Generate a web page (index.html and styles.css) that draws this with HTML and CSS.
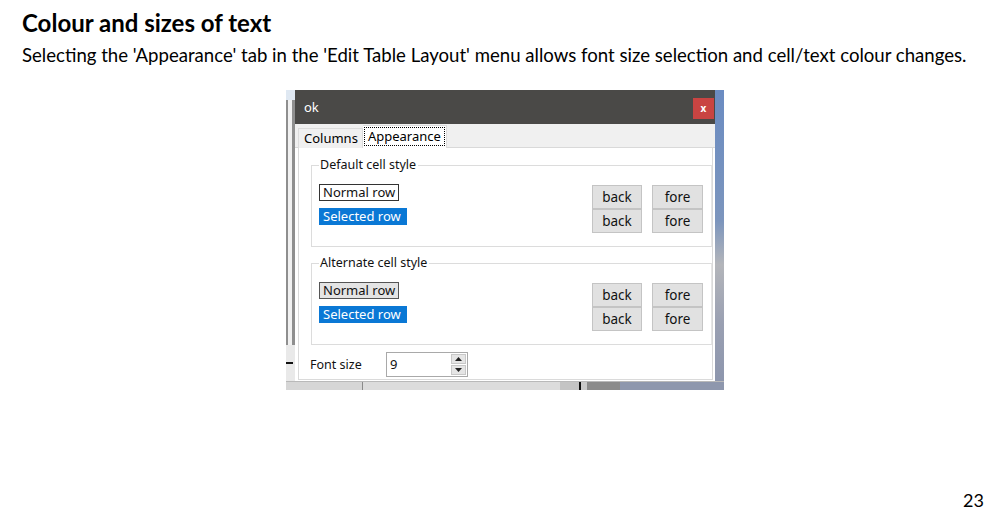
FILE: index.html
```html
<!DOCTYPE html>
<html lang="en">
<head>
<meta charset="utf-8">
<title>Colour and sizes of text</title>
<link rel="stylesheet" href="styles.css">
</head>
<body>
<div class="doc">
  <h1 class="title">Colour and sizes of text</h1>
  <p class="lead">Selecting the 'Appearance' tab in the 'Edit Table Layout' menu allows font size selection and cell/text colour changes.</p>

  <div class="figure">
    <div class="fig-main">
      <div class="strip-left">
        <div class="sl-top"></div>
        <div class="sl-bottom"><span class="sl-mark"></span></div>
      </div>
      <div class="dialog">
        <div class="titlebar">
          <span class="title-text">ok</span>
          <span class="close">x</span>
        </div>
        <div class="tabstrip">
          <div class="tab">Columns</div>
          <div class="tab tab-active"><span class="focus">Appearance</span></div>
        </div>
        <div class="tabpage">
          <fieldset class="group">
            <legend class="legend">Default cell style</legend>
            <div class="group-body">
              <div class="samples">
                <span class="sample sample-normal">Normal row</span>
                <span class="sample sample-selected">Selected row</span>
              </div>
              <div class="buttons">
                <span class="btn">back</span><span class="btn">fore</span>
                <span class="btn">back</span><span class="btn">fore</span>
              </div>
            </div>
          </fieldset>
          <fieldset class="group group-alt">
            <legend class="legend">Alternate cell style</legend>
            <div class="group-body">
              <div class="samples">
                <span class="sample sample-alt">Normal row</span>
                <span class="sample sample-selected">Selected row</span>
              </div>
              <div class="buttons">
                <span class="btn">back</span><span class="btn">fore</span>
                <span class="btn">back</span><span class="btn">fore</span>
              </div>
            </div>
          </fieldset>
          <div class="fontrow">
            <span class="fontlabel">Font size</span>
            <div class="spin">
              <span class="spin-value">9</span>
              <div class="spin-btns">
                <span class="spin-btn">
                  <svg width="7" height="4" viewBox="0 0 7 4"><path d="M0 4 L3.5 0 L7 4 Z" fill="#222"/></svg>
                </span>
                <span class="spin-btn">
                  <svg width="7" height="4" viewBox="0 0 7 4"><path d="M0 0 L3.5 4 L7 0 Z" fill="#222"/></svg>
                </span>
              </div>
            </div>
          </div>
        </div>
      </div>
      <div class="strip-right"></div>
    </div>
    <div class="fig-bottom"></div>
  </div>

  <div class="pagenum">23</div>
</div>
</body>
</html>
```

FILE: styles.css
```css
* { box-sizing: border-box; }

body {
  margin: 0;
  background: #ffffff;
  color: #000000;
  font-family: Lato, "Liberation Sans", sans-serif;
}

.doc {
  padding: 9px 0 0 22px;
}

.title {
  margin: 0;
  font-size: 24px;
  line-height: 28px;
  font-weight: 700;
}

.lead {
  margin: 7px 0 0 0;
  font-size: 18.6px;
  line-height: 22px;
  white-space: nowrap;
}

/* ---------- embedded screenshot ---------- */
.figure {
  margin: 24px 0 0 264px;
  width: 438px;
  height: 300px;
  display: flex;
  flex-direction: column;
  font-family: "Noto Sans", "DejaVu Sans", sans-serif;
}

.fig-main {
  display: flex;
  height: 291px;
}

.strip-left {
  width: 9px;
  display: flex;
  flex-direction: column;
}

.sl-top {
  flex: 1;
  background:
    linear-gradient(to bottom, #dfe8f2 0 10px, transparent 10px),
    linear-gradient(to right, #8f8f8f 0 2px, #f1f1f1 2px 6px, #8f8f8f 6px 9px);
}

.sl-bottom {
  height: 36px;
  background: #e9e9e9;
  display: flex;
  flex-direction: column;
  padding-top: 17px;
}

.sl-mark {
  display: block;
  width: 7px;
  height: 2px;
  background: #111;
}

.strip-right {
  width: 9px;
  background: linear-gradient(to bottom, #6b8cc2 0%, #7c95bd 45%, #b3b5ba 60%, #9aa0b2 80%, #8d96ad 100%);
}

.fig-bottom {
  height: 9px;
  background:
    linear-gradient(to right,
      #d6d6d6 0 76px, #8a8a8a 76px 77px, #dcdcdc 77px 274px,
      #c4c4c4 274px 293px, #111 293px 295px, #c9c9c9 295px 301px,
      #8b8b8b 301px 334px, #8e97ad 334px 438px);
  border-top: 1px solid #b9b9b9;
}

/* ---------- dialog ---------- */
.dialog {
  width: 420px;
  display: flex;
  flex-direction: column;
  background: #ffffff;
}

.titlebar {
  height: 34px;
  flex: none;
  background: #4a4947;
  display: flex;
  justify-content: space-between;
  align-items: flex-start;
  padding-left: 9px;
}

.title-text {
  color: #ffffff;
  font-size: 13px;
  line-height: 34px;
}

.close {
  margin: 8px 1px 0 0;
  width: 21px;
  height: 21px;
  background: #c94442;
  color: #ffffff;
  font-size: 10px;
  font-weight: 700;
  line-height: 20px;
  text-align: center;
}

.tabstrip {
  height: 24px;
  flex: none;
  background: #f0f0f0;
  display: flex;
  align-items: flex-end;
  padding-left: 3px;
  border-bottom: 1px solid #d9d9d9;
}

.tab {
  height: 20px;
  padding: 0 4px 0 5px;
  font-size: 13px;
  line-height: 18px;
  color: #000;
  border: 1px solid #dcdcdc;
  border-bottom: none;
  background: #f0f0f0;
  margin-bottom: -1px;
}

.tab-active {
  height: 23px;
  background: #ffffff;
  padding: 1px 1px 2px 1px;
  border-left: none;
  margin-left: 0;
}

.focus {
  display: block;
  height: 19px;
  line-height: 17px;
  padding: 0 3px;
  border: 1px dotted #000;
}

.tabpage {
  flex: 1;
  margin: 0 2px 1px 3px;
  border: 1px solid #dadada;
  border-top: none;
  padding: 0 0 0 11px;
  background: #fff;
}

.group {
  margin: 9px 0 0 1px;
  padding: 0 8px 13px 7px;
  border: 1px solid #dcdcdc;
  border-right-color: #e6e6e6;
  min-width: 0;
}

.group-alt {
  margin-top: 8px;
}

.legend {
  padding: 0 2px 0 1px;
  font-size: 12.5px;
  line-height: 16px;
  color: #111;
}

.group-body {
  display: flex;
  justify-content: space-between;
  align-items: flex-start;
}

.samples {
  display: flex;
  flex-direction: column;
  align-items: flex-start;
  gap: 7px;
  padding-top: 11px;
}

.sample {
  display: block;
  height: 17px;
  padding: 0 3px;
  font-size: 13px;
  line-height: 15px;
  border: 1px solid #333;
  color: #111;
  background: #fff;
}

.sample-alt {
  background: #e4e4e4;
  border-color: #555;
}

.sample-selected {
  background: #0a78d5;
  border-color: #0a78d5;
  color: #ffffff;
  padding-right: 5px;
}

.buttons {
  display: grid;
  grid-template-columns: 50px 51px;
  column-gap: 10px;
  padding-top: 12px;
}

.btn {
  display: block;
  height: 24px;
  background: #e1e1e1;
  border: 1px solid #c4c4c4;
  font-size: 13.5px;
  line-height: 22px;
  text-align: center;
  color: #111;
}

.fontrow {
  display: flex;
  align-items: center;
  margin-top: 7px;
}

.fontlabel {
  width: 76px;
  font-size: 12.5px;
  color: #111;
}

.spin {
  width: 82px;
  height: 25px;
  border: 1px solid #a9a9a9;
  display: flex;
  justify-content: space-between;
  align-items: stretch;
  padding: 1px;
}

.spin-value {
  font-size: 13px;
  line-height: 21px;
  padding-left: 2px;
  color: #111;
}

.spin-btns {
  width: 15px;
  display: flex;
  flex-direction: column;
  gap: 1px;
}

.spin-btn {
  flex: 1;
  background: #e5e5e5;
  border: 1px solid #c8c8c8;
  display: flex;
  align-items: center;
  justify-content: center;
}

.spin-btn svg {
  display: block;
}

/* ---------- page number ---------- */
.pagenum {
  margin-top: 100px;
  padding-right: 12px;
  text-align: right;
  font-size: 18px;
  line-height: 20px;
}
```
